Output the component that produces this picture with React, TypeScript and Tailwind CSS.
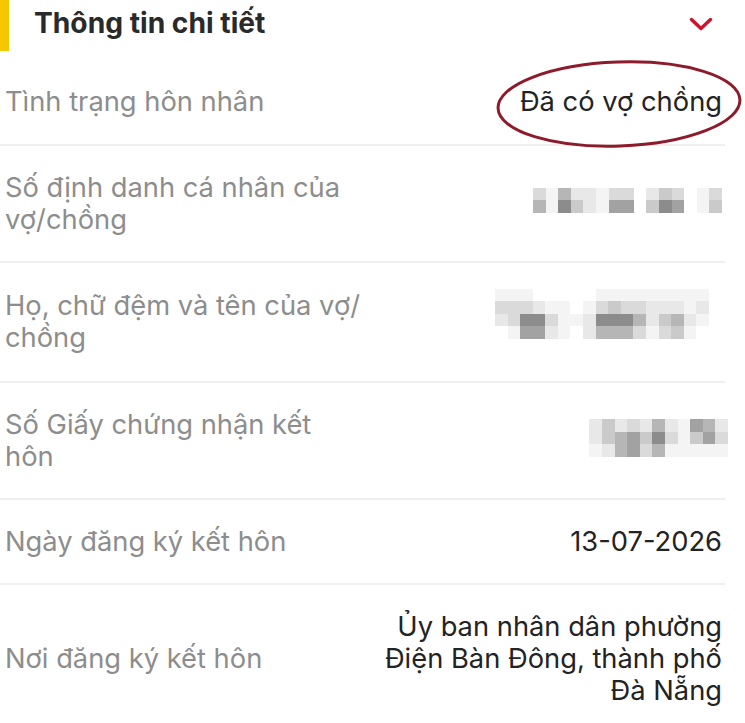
import React from 'react';

// pixelated (redacted) values, one digit per block = grey level
const shade: Record<string, string> = {
  '0': 'bg-white',
  '1': 'bg-[#f4f4f4]',
  '2': 'bg-[#e8e8e8]',
  '3': 'bg-[#dadada]',
  '4': 'bg-[#cacaca]',
  '5': 'bg-[#b6b6b6]',
  '6': 'bg-[#a2a2a2]',
  '7': 'bg-[#8c8c8c]',
};

const idBlur = ['315221330243013', '517421660476014'];
const nameBlur = [
  '11100000111111111',
  '33321101343322212',
  '23773112777524521',
  '01662102555313410',
];
const certBlur = ['24232521652', '24564731463', '12563511111'];

const Pixelated = ({ rows, className = '' }: { rows: string[]; className?: string }) => (
  <div className={`flex flex-col items-end ${className}`}>
    {rows.map((r, i) => (
      <div key={i} className="flex">
        {r.split('').map((c, j) => (
          <div key={j} className={`w-[12.6px] h-[12.5px] ${shade[c]}`} />
        ))}
      </div>
    ))}
  </div>
);

interface RowProps {
  label: React.ReactNode;
  children: React.ReactNode;
  last?: boolean;
  className?: string;
}

const Row: React.FC<RowProps> = ({ label, children, last, className = '' }) => (
  <div
    className={`relative flex items-center justify-between py-[25.5px] pl-[5px] pr-[3px] ${
      last ? '' : 'border-b-2 border-[#efefef]'
    } ${className}`}
  >
    <div className="w-[370px] shrink-0 text-[27.3px] leading-[32px] text-[#8d8d8d]">{label}</div>
    <div className="flex flex-1 justify-end text-right text-[27.3px] leading-[32px] text-[#232323]">
      {children}
    </div>
  </div>
);

export default function App() {
  return (
    <div className="min-h-screen bg-white" style={{ fontFamily: 'Inter, "Noto Sans", sans-serif' }}>
      <div className="relative w-[725px]">
        {/* section header */}
        <div className="flex h-[60px] items-start">
          <div className="h-[51px] w-[9px] bg-[#f7c600]" />
          <h2 className="ml-[25px] pt-[5px] text-[28.2px] font-bold leading-[36px] text-[#2a2a2a]">
            Thông tin chi tiết
          </h2>
          <svg
            className="ml-auto mr-[12px] mt-[17px]"
            width="24"
            height="15"
            viewBox="0 0 24 15"
            fill="none"
          >
            <path d="M2.5 2.5 L12 11.5 L21.5 2.5" stroke="#d0112b" strokeWidth="3.4" strokeLinecap="round" strokeLinejoin="round" />
          </svg>
        </div>

        <Row label="Tình trạng hôn nhân" className="h-[86px]">
          <span>Đã có vợ chồng</span>
          <svg
            className="pointer-events-none absolute left-[494px] top-[-2px]"
            width="252"
            height="96"
            viewBox="0 0 252 96"
            fill="none"
          >
            <ellipse
              cx="125"
              cy="46"
              rx="121"
              ry="42"
              transform="rotate(-2 125 46)"
              stroke="#8d1b2b"
              strokeWidth="3"
            />
          </svg>
        </Row>

        <Row label={<>Số định danh cá nhân của<br />vợ/chồng</>}>
          <Pixelated rows={idBlur} className="mb-[7px]" />
        </Row>

        <Row label={<>Họ, chữ đệm và tên của vợ/<br />chồng</>}>
          <Pixelated rows={nameBlur} className="mr-[13px] mb-[17px]" />
        </Row>

        <Row label={<>Số Giấy chứng nhận kết<br />hôn</>}>
          <Pixelated rows={certBlur} className="-mr-[6px] mb-[5px]" />
        </Row>

        <Row label="Ngày đăng ký kết hôn">
          <span>13-07-2026</span>
        </Row>

        <Row label="Nơi đăng ký kết hôn" last>
          <span className="block w-[346px]">Ủy ban nhân dân phường Điện Bàn Đông, thành phố Đà Nẵng</span>
        </Row>
      </div>
    </div>
  );
}
